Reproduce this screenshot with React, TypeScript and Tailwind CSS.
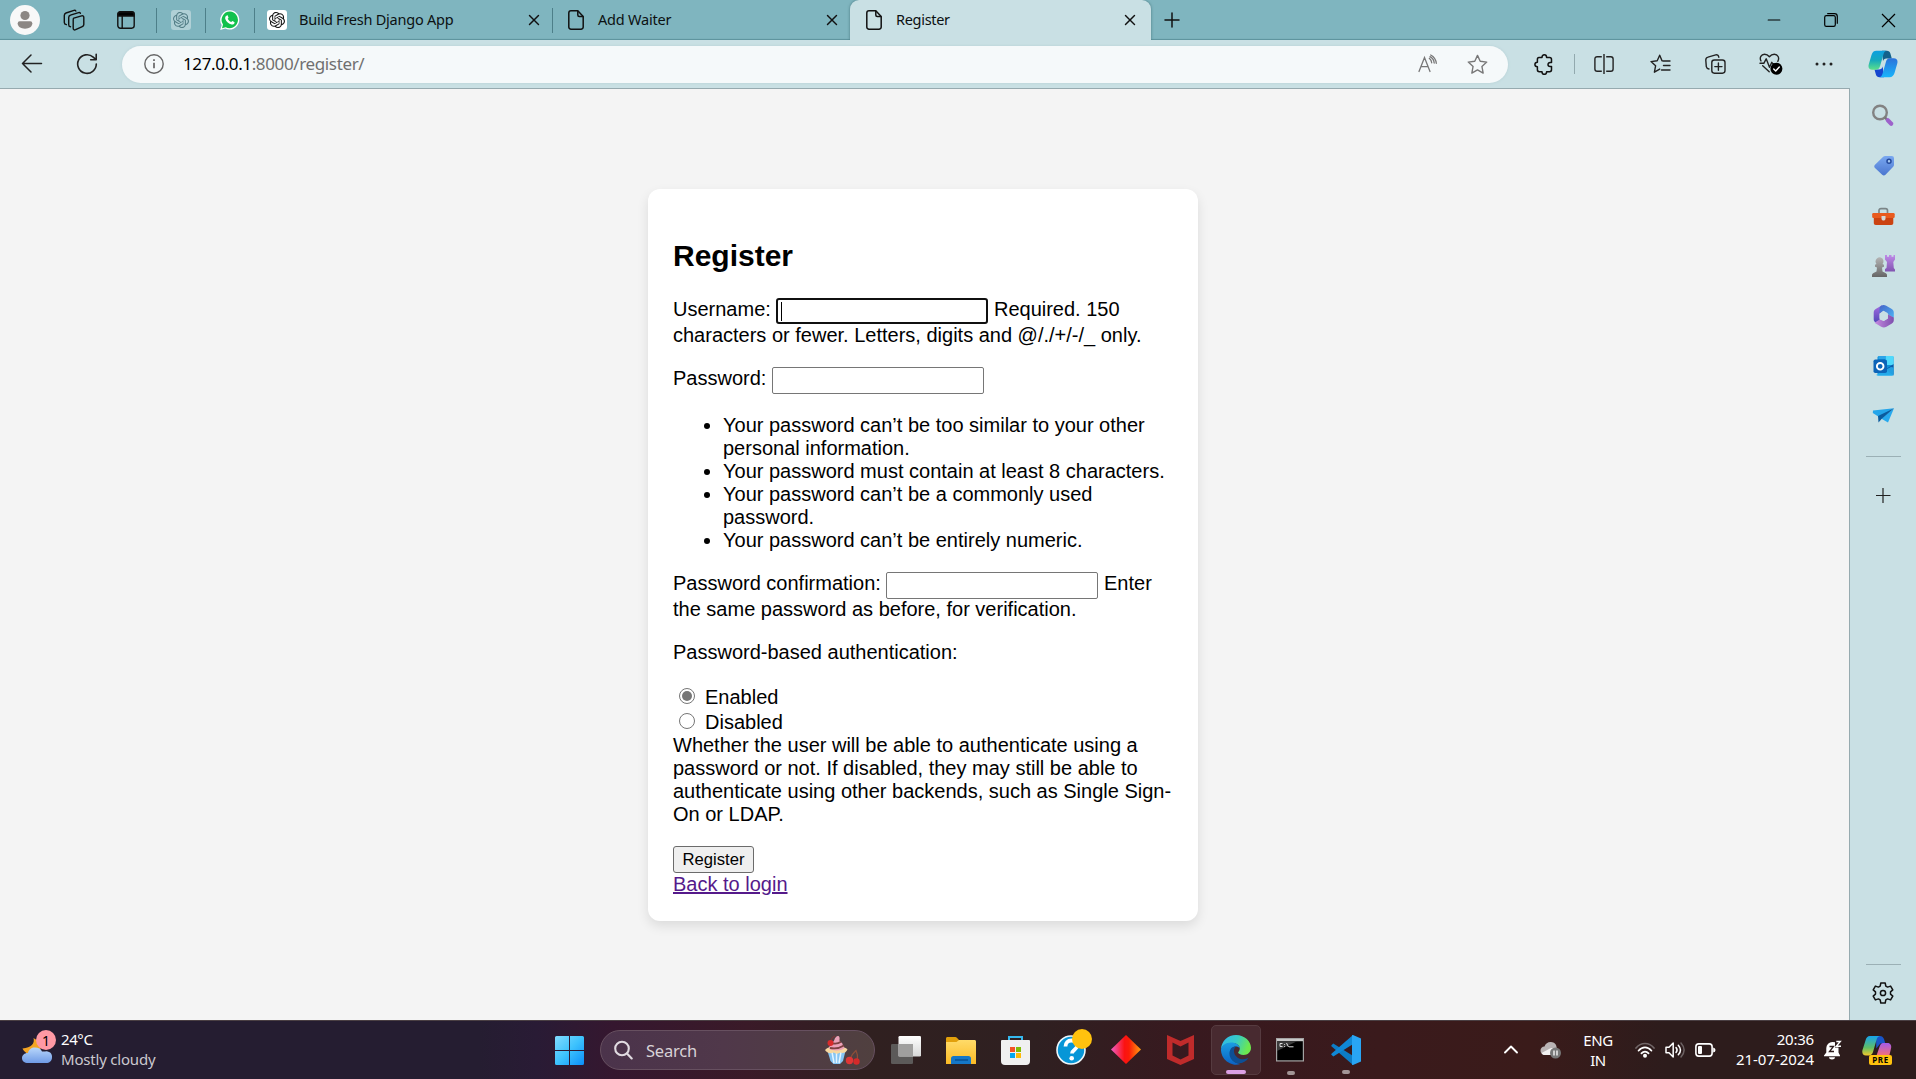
import React from "react";
import { SiOpenai } from "react-icons/si";
import { X, Plus, Minus } from "lucide-react";

const Sep = ({ className = "" }: { className?: string }) => (
  <div className={`h-[25px] w-px shrink-0 bg-[#4d7f89] ${className}`} />
);

const PageIcon = () => (
  <svg width="16" height="20" viewBox="0 0 16 20" fill="none" stroke="#111" strokeWidth="1.5" strokeLinejoin="round">
    <path d="M3 .8h6.8L15.2 6.4V17a2.2 2.2 0 0 1-2.2 2.2H3A2.2 2.2 0 0 1 .8 17V3A2.2 2.2 0 0 1 3 .8Z" />
    <path d="M9.8.8v4.1c0 .9.6 1.5 1.5 1.5h3.9" />
  </svg>
);

const CloseTab = () => <X size={18} strokeWidth={1.9} className="shrink-0 text-[#111]" />;

function TabBar() {
  return (
    <div className="flex h-10 items-center bg-[#7fb5bf] text-[14.5px] text-[#0c1112] shadow-[inset_0_-2px_1px_-1px_#5d929c]">
      <svg className="ml-[10px]" width="30" height="30" viewBox="0 0 30 30">
        <circle cx="15" cy="15" r="15" fill="#f8f8f8" />
        <circle cx="15" cy="10.5" r="4.6" fill="#8c8784" />
        <path d="M9.7 16.3h10.6a2 2 0 0 1 2 2c0 3.4-3 5.4-7.3 5.4s-7.3-2-7.3-5.4a2 2 0 0 1 2-2Z" fill="#8c8784" />
      </svg>
      <svg className="ml-[23px]" width="22" height="22" viewBox="0 0 22 22" fill="none" stroke="#111" strokeWidth="1.4" strokeLinejoin="round" strokeLinecap="round">
        <path d="M10.8 9.2 18.6 6.9c1.4-.4 2.2.3 2.2 1.6v7c0 1-.5 1.700-1.500 2.100l-6.700 3.100c-1.400.6-2.400 0-2.400-1.400v-8.400c0-.9.1-1.400.6-1.700Z" />
        <path d="M7.500 17.800c-1.200-.1-1.800-.9-1.800-2V8.400c0-1.200.6-1.900 1.700-2.200L15.600 3.600c.9-.2 1.500.1 1.800.7" />
        <path d="M3.400 15.600C2.100 15.400 1.300 14.600 1.300 13.400V6.400c0-1.200.6-2 1.700-2.400L11 1.400c.8-.2 1.500 0 1.800.6" />
      </svg>
      <svg className="ml-[32px]" width="18" height="18" viewBox="0 0 18 18" fill="none" stroke="#111" strokeWidth="1.4">
        <rect x=".8" y=".8" width="16.400" height="16.400" rx="2.600" />
        <path d="M1 3.400C1 1.800 1.800 1 3.400 1h11.200C16.200 1 17 1.800 17 3.400V5H1Z" fill="#000" />
        <path d="M5.200 5v12" />
      </svg>
      <Sep className="ml-[21px]" />
      <div className="ml-[14px] flex size-5 items-center justify-center rounded-[3px] bg-[#b0d0d6]">
        <SiOpenai size={16} color="#527d86" />
      </div>
      <Sep className="ml-[14px]" />
      <svg className="ml-[14px]" width="20" height="20" viewBox="0 0 20 20">
        <path d="M10 .2A9.700 9.700 0 0 0 1.700 15L.2 20l5.100-1.400A9.700 9.700 0 1 0 10 .2Z" fill="#fff" />
        <path d="M10 1.600A8.300 8.300 0 0 0 3 14.500l-1 3.700 3.700-1A8.300 8.300 0 1 0 10 1.600Z" fill="#12c14d" />
        <path d="M6.900 5.400c.5-.1.800 0 1 .5l.6 1.500c.2.500-.6 1-.8 1.400.8 1.600 1.900 2.600 3.500 3.300.4 0 .9-1.100 1.300-1l1.700.8c.5.200.4.800.2 1.400-.4 1-1.700 1.500-2.800 1.200-3-.8-5.200-2.800-6.300-5.500-.5-1.500.3-3.400 1.600-3.600Z" fill="#fff" />
      </svg>
      <Sep className="ml-[14px]" />
      <div className="ml-3 flex size-5 shrink-0 items-center justify-center rounded-[3px] bg-white">
        <SiOpenai size={16} color="#151515" />
      </div>
      <span className="ml-[12px] w-[226px] whitespace-nowrap tracking-[-0.24px]">Build Fresh Django App</span>
      <CloseTab />
      <Sep className="ml-[9px]" />
      <div className="ml-[15px]"><PageIcon /></div>
      <span className="ml-[14px] w-[225px] whitespace-nowrap tracking-[-0.2px]">Add Waiter</span>
      <CloseTab />
      <div className="relative ml-[9px] flex h-10 w-[301px] items-center rounded-t-[9px] bg-[#c9e0e4] shadow-[0_0_3px_#47777f]">
        <div className="absolute -bottom-1 -left-1 -right-1 h-1 bg-[#c9e0e4]" />
        <div className="ml-4"><PageIcon /></div>
        <span className="ml-[14px] w-[225px] whitespace-nowrap tracking-[-0.3px]">Register</span>
        <CloseTab />
      </div>
      <Plus className="ml-[9px] text-[#111]" size={24} strokeWidth={1.5} />
      <div className="ml-auto mr-5 flex items-center text-black">
        <Minus size={20} strokeWidth={1.3} />
        <svg className="ml-[40px]" width="14" height="14" viewBox="0 0 14 14" fill="none" stroke="#000" strokeWidth="1.2">
          <rect x=".7" y="2.700" width="10.600" height="10.600" rx="1.600" />
          <path d="M3.200.7h7.300a2.800 2.800 0 0 1 2.800 2.800v7.300" />
        </svg>
        <svg className="ml-[43px]" width="15" height="15" viewBox="0 0 15 15" stroke="#000" strokeWidth="1.200">
          <path d="m1 1 13 13M14 1 1 14" />
        </svg>
      </div>
    </div>
  );
}

const STAR = "M10 1.300 12.600 6.900 18.800 7.700 14.200 11.900 15.400 18.200 10 15.200 4.600 18.200 5.800 11.900 1.200 7.700 7.400 6.900Z";

const CopilotLogo = () => (
  <svg width="30" height="28" viewBox="0 0 30 28">
    <defs>
      <linearGradient id="cpA" x1="0" y1="0" x2="0" y2="1"><stop stopColor="#0c9fe0" /><stop offset=".5" stopColor="#16a9bd" /><stop offset="1" stopColor="#5be08a" /></linearGradient>
      <linearGradient id="cpB" x1="0" y1="0" x2="0" y2="1"><stop stopColor="#2b72da" /><stop offset="1" stopColor="#18b4fb" /></linearGradient>
    </defs>
    <path d="M14 .8h4.800c2 0 3 .8 3.600 2.700l1.400 5h-5.500c-1.800 0-2.800 1-3.300 2.700Z" fill="#12628c" />
    <path d="M16 27.200h-4.500c-2 0-3-.8-3.600-2.700L6.500 19.500H11c2 0 3-.8 3.700-3Z" fill="#1546cf" />
    <path d="M8.500.8h10c-1.800.3-2.500 1.600-3.100 3.600l-3.300 11.700c-.7 2.300-1.800 3.600-4.100 3.600H4.400C1 19.700-.1 17.500.8 14.200L3.500 5C4.400 2.300 5.700.8 8.500.8Z" fill="url(#cpA)" />
    <path d="M21.500 27.200h-10c1.800-.3 2.500-1.600 3.100-3.600l3.300-11.700c.7-2.300 1.800-3.600 4.100-3.600h3.600c3.400 0 4.500 2.200 3.600 5.500L26.500 23c-.9 2.700-2.200 4.200-5 4.200Z" fill="url(#cpB)" />
  </svg>
);

function Toolbar() {
  return (
    <div className="flex h-12 items-center bg-[#c9e0e4]">
      <svg className="ml-[21px]" width="22" height="20" viewBox="0 0 22 20" fill="none" stroke="#222" strokeWidth="1.500" strokeLinecap="round" strokeLinejoin="round">
        <path d="M20.500 9.500H1.500M10 1 1.500 9.500 10 18" />
      </svg>
      <svg className="ml-[33px]" width="22" height="22" viewBox="0 0 22 22" fill="none" stroke="#222" strokeWidth="1.600" strokeLinecap="round" strokeLinejoin="round">
        <path d="M20.300 11A9.300 9.300 0 1 1 17.200 4.100L20 6.700M20.200 1.300v5.500h-5.500" />
      </svg>
      <div className="ml-[24px] flex h-[37px] w-[1386px] items-center rounded-full bg-[#f5f9fa] shadow-[0_0_3px_#b5cfd4]">
        <svg className="ml-[22px]" width="20" height="20" viewBox="0 0 20 20" fill="none" stroke="#666" strokeWidth="1.400">
          <circle cx="10" cy="10" r="9.200" />
          <path d="M10 8.700v5.500M10 5.300v1.700" strokeWidth="1.700" />
        </svg>
        <span className="ml-[19px] text-[17px] tracking-[-0.37px] text-[#707070]"><span className="text-black">127.0.0.1</span>:8000/register/</span>
        <svg className="ml-auto" width="20" height="20" viewBox="0 0 20 20" fill="none" stroke="#777" strokeWidth="1.300" strokeLinecap="round">
          <path d="M1 17.500 6.500 3.500 12 17.500M3 12.700h7M11.300 4.300c1.400 1.100 2.200 2.600 2.400 4.500M12.700 1c3.200 1.700 5.200 4.400 5.600 8.300" />
          <path d="M12 2.700c2.500 1.300 3.900 3.400 4.200 6.300" />
        </svg>
        <svg className="ml-[29px] mr-[20px]" width="21" height="21" viewBox="0 0 20 20" fill="none" stroke="#777" strokeWidth="1.300" strokeLinejoin="round"><path d={STAR} /></svg>
      </div>
      <svg className="ml-[26px]" width="20" height="21" viewBox="0 0 20 21" fill="none" stroke="#111" strokeWidth="1.500" strokeLinejoin="round">
        <path d="M5 3.500h3c0-1.600.9-2.700 2.300-2.700s2.300 1.100 2.300 2.700h3c1.100 0 1.900.7 1.900 1.900v3.200h-1.400c-1.300 0-2.100.8-2.100 2s.8 2 2.100 2h1.400v3.200c0 1.200-.8 1.900-1.900 1.900h-3c0 1.600-.9 2.600-2.300 2.600S8 19.300 8 17.700H5.300c-1.200 0-1.900-.7-1.900-1.900v-3C1.800 12.800.9 12 .9 10.600s.9-2.300 2.500-2.300V5.400c0-1.200.6-1.900 1.600-1.900Z" />
      </svg>
      <div className="ml-[20px] h-5 w-px bg-[#92a9ae]" />
      <svg className="ml-[19px]" width="20" height="20" viewBox="0 0 20 20" fill="none" stroke="#222" strokeWidth="1.400">
        <path d="M7.800 2.700H3.200C1.800 2.700.9 3.500.9 5v10c0 1.500.9 2.300 2.300 2.300h4.600M12.200 2.700h4.600c1.400 0 2.300.8 2.300 2.300v10c0 1.500-.9 2.300-2.300 2.300h-4.600M10 0v20" />
      </svg>
      <svg className="ml-[36px]" width="21" height="20" viewBox="0 0 21 20" fill="none" stroke="#222" strokeWidth="1.400" strokeLinejoin="round" strokeLinecap="round">
        <path d="M13.300 6.900 12 6.700 9.700 1.200 7.200 6.700 1 7.600l4.600 4.200-1.200 6.400 5.300-3.100M13 7h7M13.500 11.500H20M11.500 16H20" />
      </svg>
      <svg className="ml-[34px]" width="21" height="20" viewBox="0 0 21 20" fill="none" stroke="#222" strokeWidth="1.400" strokeLinecap="round">
        <rect x="6.800" y="6" width="13.200" height="13.200" rx="2.600" />
        <path d="M13.400 9v7.200M9.800 12.600H17M4 15C2.400 14.800 1.600 14 1.300 12.600L.8 6.300C.7 4.500 1.400 3.500 3 3.100L10.700.9c1.600-.4 2.700.3 3.100 2.300" />
      </svg>
      <svg className="ml-[33px]" width="24" height="22" viewBox="0 0 24 22" fill="none" stroke="#222" strokeWidth="1.400" strokeLinejoin="round" strokeLinecap="round">
        <path d="M2 8C.2 4.800 2.200 1.300 5.500 1.300c2.200 0 3.600.9 4.900 2.500 1.300-1.600 2.700-2.500 4.900-2.500 3.500 0 5.500 3.600 3.500 7M1 10.300h3.800l2.400-4.500 3.300 8.500 2.300-5 1 1.500h1.400M3.700 12.800l6.500 5.900" />
        <circle cx="17.400" cy="15.800" r="6" fill="#000" stroke="none" />
        <path d="m14.700 16 2 2 3.600-4" stroke="#fff" />
      </svg>
      <svg className="ml-[32px]" width="18" height="4" viewBox="0 0 18 4" fill="#222"><circle cx="2" cy="2" r="1.500" /><circle cx="9" cy="2" r="1.500" /><circle cx="16" cy="2" r="1.500" /></svg>
      <div className="ml-auto mr-[18px]"><CopilotLogo /></div>
    </div>
  );
}

function Sidebar() {
  return (
    <aside className="flex w-[66px] shrink-0 flex-col items-center bg-[#c9e0e4] pt-4">
      <svg width="24" height="24" viewBox="0 0 24 24" fill="none">
        <circle cx="9" cy="8.500" r="6.800" stroke="#828282" strokeWidth="2.400" />
        <path d="m13.800 13.300 2 2" stroke="#777" strokeWidth="2.500" />
        <path d="m16.800 16.300 3.400 3.400" stroke="#9d62cb" strokeWidth="4.200" strokeLinecap="round" />
      </svg>
      <svg className="mt-[26px]" width="24" height="24" viewBox="0 0 24 24">
        <defs><linearGradient id="tg" x1="0" y1="0" x2="0" y2="1"><stop stopColor="#7aa8f0" /><stop offset="1" stopColor="#4a76cf" /></linearGradient></defs>
        <path d="M14.200 2h6.600A2.200 2.200 0 0 1 23 4.200v6.600c0 .8-.2 1.300-.8 1.900l-7.700 8c-1 1-2.300 1-3.300 0L4 14c-1-1-1-2.300 0-3.300l8.200-8c.6-.5 1.200-.7 2-.7Z" fill="url(#tg)" />
        <circle cx="18" cy="7.200" r="2" fill="#a4c7f0" stroke="#244a9c" strokeWidth="1.500" />
      </svg>
      <svg className="mt-[28px]" width="24" height="22" viewBox="0 0 24 22">
        <path d="M8 8V4.500C8 3.200 8.800 2.600 10 2.600h4.500c1.200 0 2 .6 2 1.900V8" fill="none" stroke="#7b8587" strokeWidth="1.700" />
        <path d="M2.800 9h19.500v8c0 1.300-.7 2-2 2H4.800c-1.300 0-2-.7-2-2Z" fill="#cb4311" />
        <rect x="1.200" y="7" width="22.500" height="5" rx="1.200" fill="#e95b1e" />
        <path d="M10.500 10h4v2.500c0 2.800-4 2.800-4 0Z" fill="#d5d9d9" />
      </svg>
      <svg className="mt-[26px]" width="24" height="24" viewBox="0 0 24 24">
        <defs><linearGradient id="pw" x1="0" y1="0" x2="0" y2="1"><stop stopColor="#b4b4b4" /><stop offset="1" stopColor="#666" /></linearGradient><linearGradient id="rk" x1="0" y1="0" x2="0" y2="1"><stop stopColor="#bf8ae8" /><stop offset="1" stopColor="#8154b0" /></linearGradient></defs>
        <path d="M14 1h2v1.700h2V1h2.500v1.700h2V1H24v4.500L22.300 8l.5 6 1.200 1.500v2H14V15l1.500-1 .5-6L14 5.500Z" fill="url(#rk)" />
        <path d="M4.500 7.500a4 4 0 1 1 7 2.500l1.500.8v2l-2 .7.500 4 3 1.600c1 .5 1.500 1.200 1.500 2.300V23H1v-1.600c0-1.100.5-1.800 1.500-2.300l3-1.600.5-4-2-.7v-2l1.500-.8c-.6-.7-1-1.500-1-2.500Z" fill="url(#pw)" />
      </svg>
      <svg className="mt-[26px]" width="24" height="24" viewBox="0 0 24 24">
        <defs>
          <linearGradient id="m1" x1="0" y1="0" x2="0" y2="1"><stop stopColor="#a56be0" /><stop offset="1" stopColor="#5148b8" /></linearGradient>
          <linearGradient id="m2" x1="0" y1="0" x2="1" y2="1"><stop stopColor="#4664c8" /><stop offset="1" stopColor="#4cb4f4" /></linearGradient>
          <linearGradient id="m3" x1="0" y1="0" x2="1" y2="0"><stop stopColor="#c58be0" /><stop offset="1" stopColor="#7e4fae" /></linearGradient>
        </defs>
        <path d="M11 1.300 4.700 5C3.300 5.800 2.700 7 2.700 8.500v6.800c0 1.700.8 2.800 2.300 3.200l3.700-2.200V9.500l2.300-1.800Z" fill="url(#m1)" />
        <path d="M10 1.800c1.800-1.100 3.500-1.100 5.200-.1l5.600 3.300c1.300.8 2 2 2 3.500v5.300l-6-3.500-.3-1.300-4-2.200-4 2.200V5c0-1.500.5-2.400 1.500-3.200Z" fill="url(#m2)" />
        <path d="M16.800 10.300v4.200l-4.100 2.600-4-1.500-5.200 3.100 6.700 4c1.700 1 3.500 1 5.200 0l5.500-3.300c1.300-.8 1.900-1.900 1.900-3.400v-2.500Z" fill="url(#m3)" />
        <path d="M12.700 7.300 16.900 9.700v4.800l-4.200 2.400-4.200-2.400V9.700Z" fill="#c9e0e4" />
      </svg>
      <svg className="mt-[26px]" width="24" height="24" viewBox="0 0 24 24">
        <rect x="6.500" y="2" width="16" height="19" rx="1.600" fill="#0e90d8" />
        <rect x="14.500" y="2" width="8" height="9" fill="#4fd9fc" /><rect x="7.500" y="2" width="7" height="3" fill="#2ca4e8" />
        <path d="m22.500 10-8 5.500 8 6Z" fill="#0d5ca8" /><path d="M5.500 20.500 20 13l2.500.5v7c0 .8-.5 1.400-1.400 1.400H7c-.8 0-1.500-.4-1.500-1.400Z" fill="#29b0ef" opacity=".8" />
        <rect x="2.500" y="5.500" width="13.500" height="13.500" rx="1.800" fill="#0c64b8" />
        <circle cx="9.200" cy="12.300" r="3.300" fill="none" stroke="#fff" strokeWidth="1.900" />
      </svg>
      <svg className="mt-[26px]" width="24" height="24" viewBox="0 0 24 24">
        <path d="M2 6.500 23 4.200 8.500 13.300 1.800 9Z" fill="#24a5ea" /><path d="M23 4.200 17 18.500 10 14.500Z" fill="#27a9ee" /><path d="M23 4.200 7 11.900l.5 6.600 3.500-3.900Z" fill="#0b5b9e" />
      </svg>
      <div className="mt-[28px] h-px w-[35px] bg-[#9bb0b5]" />
      <svg className="mt-[31px]" width="15" height="15" viewBox="0 0 15 15" stroke="#222" strokeWidth="1.200"><path d="M7 0v15M-.5 7.500h15" /></svg>
      <div className="mt-auto h-px w-[35px] bg-[#9bb0b5]" />
      <svg className="mb-[16px] mt-[17px]" width="22" height="22" viewBox="0 0 22 22" fill="none" stroke="#111" strokeWidth="1.500" strokeLinejoin="round">
        <path d="M8.800 1h4.400l.6 3.100 1.800 1 3-1 2.200 3.800-2.300 2v2.200l2.300 2-2.200 3.800-3-1-1.800 1-.6 3.100H8.800l-.6-3.100-1.800-1-3 1-2.200-3.800 2.300-2V9.900l-2.300-2 2.200-3.800 3 1 1.800-1Z" />
        <circle cx="11" cy="11" r="2.600" />
      </svg>
    </aside>
  );
}

const Field = ({ label, after, focused }: { label: string; after?: string; focused?: boolean }) => (
  <div className="flex h-[26px] items-start whitespace-pre">
    <label>{label} </label>
    {focused ? (
      <div className="flex h-[26px] w-[212px] items-center rounded-[3px] border-2 border-[#101010] bg-white pl-[3px]"><div className="h-[19px] w-px bg-black" /></div>
    ) : (
      <div className="h-[26.500px] w-[212px] rounded-[2px] border border-[#767676] bg-white" />
    )}
    {after && <span> {after}</span>}
  </div>
);

const Radio = ({ label, on }: { label: string; on?: boolean }) => (
  <div className="flex h-[25px] items-start pl-[6px]">
    <span className="mt-[3.500px] flex size-4 items-center justify-center rounded-full border border-[#767676] bg-white">
      {on && <span className="size-[10px] rounded-full bg-[#767676]" />}
    </span>
    <span className="ml-[10px] pt-[2px]">{label}</span>
  </div>
);

function RegisterCard() {
  return (
    <main className="h-[732px] w-[550px] rounded-[12px] bg-white px-[25px] pt-[50px] font-['Liberation_Sans',Arial,sans-serif] text-[20px] leading-[23px] text-black shadow-[0_5px_12px_rgba(0,0,0,0.1)]">
      <h2 className="text-[30px] font-bold leading-[34px]">Register</h2>
      <div className="mt-[25px]">
        <Field label="Username:" after="Required. 150" focused />
        <p>characters or fewer. Letters, digits and @/./+/-/_ only.</p>
      </div>
      <div className="mt-5"><Field label="Password:" /></div>
      <ul className="mt-[21px] list-disc pl-[50px]">
        <li>Your password can’t be too similar to your other personal information.</li>
        <li>Your password must contain at least 8 characters.</li>
        <li>Your password can’t be a commonly used password.</li>
        <li>Your password can’t be entirely numeric.</li>
      </ul>
      <div className="mt-5">
        <Field label="Password confirmation:" after="Enter" />
        <p>the same password as before, for verification.</p>
      </div>
      <p className="mt-5">Password-based authentication:</p>
      <div className="mt-5">
        <Radio label="Enabled" on />
        <Radio label="Disabled" />
      </div>
      <p>Whether the user will be able to authenticate using a password or not. If disabled, they may still be able to authenticate using other backends, such as Single Sign-On or LDAP.</p>
      <button className="mt-5 flex h-[27px] w-[81px] items-center justify-center rounded-[3px] border border-[#6b6b6b] bg-[#efefef] text-[16.670px]">Register</button>
      <a href="#" className="block w-fit text-[#551a8b] underline">Back to login</a>
    </main>
  );
}

const EdgeIcon = () => (
  <svg width="30" height="30" viewBox="0 0 30 30">
    <defs>
      <linearGradient id="e1" x1="0" y1="0" x2="1" y2=".3"><stop stopColor="#2fb6ef" /><stop offset=".55" stopColor="#37cbc6" /><stop offset="1" stopColor="#6ce84f" /></linearGradient>
      <linearGradient id="e2" x1="0" y1="0" x2="0" y2="1"><stop stopColor="#1b9de2" /><stop offset="1" stopColor="#0b62c4" /></linearGradient>
    </defs>
    <path d="M0 14C.6 6 6.800 0 15 0c9 0 15 6.600 15 12.800 0 4.600-3.500 7.200-7.300 7.200-3.500 0-5.600-1.300-5.600-2.400 0-.8 1.700-1.500 1.700-4.100C18.800 10 15 8 11 8 5 8 1.500 11 0 14Z" fill="url(#e1)" />
    <path d="M0 14c1.200-3.600 5-6.400 10-6.400 5 0 8.800 2.600 8.800 6-1-1.400-2.300-2-4-2-3 0-5.400 3-5.400 7 0 6 4.800 10 10 10.400A15 15 0 0 1 0 14Z" fill="url(#e2)" />
    <path d="M10 13.500c-2.500 3.500-2 9 1.500 12.300 4.700 4.300 12.500 3 16-3-3 1.800-7.500 2-10.800-.1-4-2.600-5-7.400-1.900-11.100-1.800 0-3.600.5-4.800 1.900Z" fill="#0d4f94" />
  </svg>
);

function Taskbar() {
  return (
    <footer className="flex h-[59px] items-center border-t border-[#4a3f43] bg-[linear-gradient(90deg,#251d31_0%,#251d31_25%,#291b35_28%,#35172f_32%,#3a1a28_39%,#302020_45%,#2f2021_54%,#38191f_62%,#3a1a1c_72%,#3a1b1a_80%,#2d1c1c_87%,#2d1c1c_100%)] font-['Noto_Sans','Open_Sans',sans-serif] text-white">
      <div className="relative ml-[22px] size-[34px]">
        <svg width="34" height="34" viewBox="0 0 34 34">
          <defs><linearGradient id="cl" x1="0" y1="0" x2="0" y2="1"><stop stopColor="#b9d7fb" /><stop offset="1" stopColor="#6f9be6" /></linearGradient></defs>
          <path d="M11.500 5c1.500 5-2 10-11 10.500 2 5 9.500 8 14.500 5s6-10-3.500-15.500Z" fill="#f4a524" />
          <path d="M6 20c.5-3.500 3.500-5.500 7-5.500 3.500 0 6 1.500 7 4h3a5.500 5.500 0 0 1 7 6c0 3.500-2.500 5.500-6 5.500H6c-3.500 0-6-1.800-6-5 0-3 3-5.300 6-5Z" fill="url(#cl)" />
        </svg>
        <div className="absolute left-[14px] top-[-3px] flex size-5 items-center justify-center rounded-full bg-[#ff99a4] text-[14px] text-black">1</div>
      </div>
      <div className="-mt-[2px] ml-[5px] w-[494px] whitespace-nowrap text-[15px] leading-5 tracking-[-0.4px]">
        <div>24°C</div>
        <div className="tracking-[-0.2px] text-[#cbc8cf]">Mostly cloudy</div>
      </div>
      <svg width="29" height="29" viewBox="0 0 29 29">
        <defs><linearGradient id="wn" x1="0" y1="0" x2="1" y2="1"><stop stopColor="#82dcff" /><stop offset=".5" stopColor="#3dc2fd" /><stop offset="1" stopColor="#0b8efa" /></linearGradient></defs>
        <path d="M1.500 0H14v14H0V1.500Q0 0 1.500 0ZM15 0h12.500Q29 0 29 1.500V14H15ZM0 15h14v14H1.500Q0 29 0 27.500ZM15 15h14v12.500q0 1.500-1.500 1.500H15Z" fill="url(#wn)" />
      </svg>
      <div className="ml-4 flex h-10 w-[275px] items-center rounded-full border border-[#675060] bg-[linear-gradient(90deg,#4b334b,#50384a_45%,#50403f)]">
        <svg className="ml-[13px]" width="19" height="20" viewBox="0 0 19 20" fill="none" stroke="#e1dbe1" strokeWidth="2.100" strokeLinecap="round"><circle cx="8" cy="8.500" r="6.800" /><path d="m13 13.500 4.700 5" /></svg>
        <span className="ml-[13px] mt-[2px] text-[16.500px] tracking-[-0.2px] text-[#d8d2d7]">Search</span>
        <svg className="ml-auto mr-[14px]" width="36" height="30" viewBox="0 0 36 30">
          <path d="M3.500 16h18l-2.500 10-3 3H9.500l-3-3Z" fill="#85c5f3" />
          <path d="M8 17 10 28M12.500 17v11M17 17 15 28" stroke="#e3f4ff" strokeWidth="1.500" />
          <path d="M1 15c2-2.500 5-3 7-3h9c3 0 5.500 1 6.500 2.500-1.500 3.500-5 4-7 3-2 1.500-5 1.500-7 0-3 1.500-7 .5-8.500-2.500Z" fill="#f6d7a0" />
          <path d="M5 13.500c0-3 2.500-4 3.500-4-1-2 1.500-3 2-5 .5-2.500 4-5.500 5-2 .4 1.500-.5 3 .5 4s3.500 1.500 2.500 4c1.500.5 2 1.500 1.500 3-3 2.500-12 2.500-15 0Z" fill="#eca1b7" />
          <path d="M6 13c5 1 10 0 14-2.500M9 8.500c3 .5 6-.3 8-1.800" stroke="#7d4141" strokeWidth="1.800" fill="none" />
          <circle cx="6.500" cy="8" r="3" fill="#d92b2b" /><path d="M7 5Q8 2 11 1" stroke="#833" fill="none" />
          <path d="M26 24Q28 19 32 15.500q2 4 1.500 10" stroke="#8e4e38" fill="none" strokeWidth="1.200" />
          <circle cx="25.500" cy="25.500" r="3.700" fill="#e03636" /><circle cx="32.500" cy="26.500" r="3.200" fill="#d52a2a" />
        </svg>
      </div>
      <svg className="ml-4" width="30" height="28" viewBox="0 0 30 28">
        <defs><linearGradient id="tv" x1="0" y1="0" x2="0" y2="1"><stop stopColor="#fff" /><stop offset="1" stopColor="#d7d7d7" /></linearGradient></defs>
        <rect y="8" width="22" height="20" rx="1.300" fill="#5c5a59" /><rect x="7.500" width="22.500" height="20.500" rx="1.300" fill="url(#tv)" /><path d="M7.500 8H22v12.500H7.500Z" fill="#a09f9e" />
      </svg>
      <svg className="ml-[25px]" width="30" height="27" viewBox="0 0 30 27">
        <defs><linearGradient id="fd" x1="0" y1="0" x2="0" y2="1"><stop stopColor="#ffdb69" /><stop offset="1" stopColor="#fbba25" /></linearGradient></defs>
        <path d="M0 1.500C0 .7.600 0 1.500 0h7.700c.8 0 1.400.3 1.900.9L13 3v5H0Z" fill="#e2a00b" />
        <path d="M0 5h10.500L13 3h15.500c.9 0 1.500.6 1.500 1.500V27H0Z" fill="url(#fd)" />
        <path d="M5 27v-5.500C5 20 6 19 7.500 19h15c1.500 0 2.500 1 2.500 2.500V27Z" fill="#1577c7" /><path d="M9 23h13" stroke="#064b8d" strokeWidth="1.300" />
      </svg>
      <svg className="ml-[25px]" width="29" height="29" viewBox="0 0 29 29">
        <path d="M8 5V1h13v4" fill="none" stroke="#35b9ee" strokeWidth="2" />
        <path d="M0 5q0-1 1-1h27q1 0 1 1V25q0 4-4 4H4q-4 0-4-4Z" fill="#f0f0f0" />
        <path d="M9 11h5v5H9Z" fill="#f35325" /><path d="M15 11h5v5h-5Z" fill="#81bc06" /><path d="M9 17h5v5H9Z" fill="#05a6f0" /><path d="M15 17h5v5h-5Z" fill="#ffba08" />
      </svg>
      <div className="relative ml-[26px] size-[30px]">
        <svg width="30" height="30" viewBox="0 0 30 30"><circle cx="15" cy="15" r="14" fill="#0796d7" stroke="#eef7fb" strokeWidth="1.600" /><path d="M9.500 11.500c0-4 2.500-6 5.800-6 3.500 0 6 2 6 5 0 4-5.300 4.500-5.300 8" fill="none" stroke="#fff" strokeWidth="3.800" /><circle cx="15.700" cy="23.200" r="2.300" fill="#fff" /></svg>
        <div className="absolute left-4 top-[-6px] size-5 rounded-full bg-[#ffc20e]" />
      </div>
      <svg className="ml-[25px]" width="30" height="30" viewBox="0 0 30 30">
        <defs><linearGradient id="dm" x1="0" y1="0" x2="1" y2="0"><stop stopColor="#ee5fc8" /><stop offset=".45" stopColor="#fb1212" /><stop offset=".6" stopColor="#fb1b08" /><stop offset="1" stopColor="#ffa011" /></linearGradient></defs>
        <path d="m15 0 15 14.500-15 14.500L0 14.500Z" fill="url(#dm)" />
      </svg>
      <svg className="ml-[26px]" width="27" height="30" viewBox="0 0 27 30"><path d="M0 0 13.500 6 27 0v24l-13.500 6L0 24ZM5.500 7.500v13l8 4 8-4v-13l-8 4Z" fill="#bf2b2b" fillRule="evenodd" /></svg>
      <div className="relative ml-[17px] flex size-[50px] items-center justify-center rounded-[5px] border border-[#563b40] bg-[#482a30]">
        <EdgeIcon />
        <div className="absolute bottom-0 left-[14px] h-1 w-5 rounded-full bg-[#dba0e4]" />
      </div>
      <div className="relative ml-[15px]">
        <svg width="28" height="24" viewBox="0 0 28 24"><rect x=".6" y=".6" width="26.800" height="22.300" fill="#000" stroke="#a3a3a3" strokeWidth="1.200" /><path d="M1 1h26v2.200H1Z" fill="#c8c8c8" /><path d="M1 3.200h20L1 13Z" fill="#3c3c3c" /><path d="M6.500 5.500H4v3h2.500M8.500 6v.8M8.500 8v.8M10.500 5l2 4M13 8.800h4.500" stroke="#ddd" fill="none" strokeWidth="1" /></svg>
        <div className="absolute left-[11px] top-[33px] h-1 w-2 rounded-full bg-[#a39596]" />
      </div>
      <div className="relative ml-[27px] size-[30px]">
        <svg width="30" height="30" viewBox="0 0 30 30">
          <path d="M2.300 8.600.7 10a1.100 1.100 0 0 0 0 1.600L22 30l1-8.500Z" fill="#0d7cc5" />
          <path d="M2.300 21.400.7 20a1.100 1.100 0 0 1 0-1.600L22 0l1 8.500Z" fill="#1088d6" />
          <path d="M22 0 30 3.500v23L22 30c-.6.2-1-.2-1-.8V.8C21 .2 21.400-.2 22 0Z" fill="#29a5f4" />
        </svg>
        <div className="absolute left-[11px] top-[35px] h-1 w-2 rounded-full bg-[#a39596]" />
      </div>
      <svg className="ml-auto" width="16" height="10" viewBox="0 0 16 10" fill="none" stroke="#fff" strokeWidth="1.900" strokeLinecap="round" strokeLinejoin="round"><path d="m2 7.500 6-6 6 6" /></svg>
      <svg className="ml-[21px]" width="22" height="18" viewBox="0 0 22 18">
        <path d="M4.500 5.500C5.500 2.500 8 .8 11 1c3.500.2 5.500 2.500 5.700 6L6 13H4C1.500 13 .5 11.500.5 9.500s1.500-4 4-4Z" fill="#b9b3b4" />
        <path d="M1.500 12 10 7.500c3-1 5.500-.5 7 2V14H4.500C3 14 2 13.500 1.500 12Z" fill="#f2f1f1" />
        <circle cx="15.500" cy="12" r="5.500" fill="#777" /><path d="M14 9.500v5M17 9.500v5" stroke="#fff" strokeWidth="1.300" />
      </svg>
      <div className="-mt-px ml-[19px] w-[34px] text-center text-[15px] leading-5 tracking-[-0.4px]"><div>ENG</div><div>IN</div></div>
      <svg className="ml-[20px]" width="20" height="16" viewBox="0 0 20 16" fill="none" strokeWidth="1.700" strokeLinecap="round">
        <path d="M1 6c5-6 13-6 18 0" stroke="#716667" /><path d="M3.500 8.700c3.800-4.500 9.200-4.500 13 0M6.400 11.400c2.200-2.500 5-2.500 7.200 0" stroke="#fff" /><circle cx="10" cy="13.800" r="2" fill="#fff" />
      </svg>
      <svg className="ml-[10px]" width="20" height="18" viewBox="0 0 20 18" fill="none" stroke="#fff" strokeWidth="1.500" strokeLinecap="round" strokeLinejoin="round">
        <path d="M1 6.200h3L8.200 2v14L4 11.800H1ZM11 6.500c1.300 1.500 1.300 3.500 0 5M13.300 4.200c2.700 3 2.700 6.600 0 9.600" /><path d="M16 2c4 4.500 4 9.500 0 14" stroke="#6b6061" />
      </svg>
      <svg className="ml-[10px]" width="21" height="14" viewBox="0 0 21 14"><rect x=".9" y=".9" width="16.200" height="12.200" rx="2.800" fill="none" stroke="#fff" strokeWidth="1.600" /><rect x="3" y="3" width="4" height="8" rx="1" fill="#fff" /><path d="M18.200 4.500q2.300.5 2.300 2.500t-2.300 2.500Z" fill="#fff" /></svg>
      <div className="-mt-[2px] ml-[16px] w-[82px] text-right text-[15px] leading-5"><div className="tracking-[-0.2px]">20:36</div><div className="tracking-[-0.02px]">21-07-2024</div></div>
      <svg className="ml-[10px]" width="18" height="20" viewBox="0 0 18 20">
        <path d="M8.500 2a6 6 0 0 0-6.200 6v4.500L0 15.500v.8h16v-.8l-1.500-3V2.500ZM5 17.200h6c0 3-6 3-6 0Z" fill="#fff" />
        <path d="M5.500 6.500h4L5.500 11.500h4.500" stroke="#2d1c1c" strokeWidth="1.300" fill="none" /><path d="M11 0h7v7.500h-7Z" fill="#2d1c1c" /><path d="M12.300 1.500h4L12.300 6.300h4.700" stroke="#fff" strokeWidth="1.400" fill="none" />
      </svg>
      <div className="relative ml-[20px] mr-[24px] h-[29px] w-[30px]">
        <svg width="30" height="28" viewBox="0 0 30 28">
          <defs><linearGradient id="pa" x1="0" y1="0" x2="0" y2="1"><stop stopColor="#16a4ed" /><stop offset=".6" stopColor="#60bd65" /><stop offset="1" stopColor="#f2c92c" /></linearGradient><linearGradient id="pb" x1="0" y1="0" x2="0" y2="1"><stop stopColor="#a35be9" /><stop offset="1" stopColor="#fd7169" /></linearGradient></defs>
          <path d="M14 0h4c2 0 3 1 4 3l1.300 4.500h-5l-4 5Z" fill="#1854c7" />
          <path d="M8 0h10c-2 .3-3 2-3.500 4L11 16c-.7 2-2 3.500-4 3.500H4C1 19.500-.3 17 .5 14L3.500 4.500C4.300 1.500 5.500 0 8 0Z" fill="url(#pa)" />
          <path d="M14 21l4-11.500C19 7.500 20 7 22 7h3.500c3 0 4.300 2.500 3.500 5.500L27 21Z" fill="url(#pb)" />
        </svg>
        <div className="absolute left-[7px] top-[19px] flex h-[10px] w-[23px] items-center justify-center rounded-[2px] bg-[#ffc20e] text-[8px] font-bold leading-none tracking-[0.6px] text-black">PRE</div>
      </div>
    </footer>
  );
}

export default function App() {
  return (
    <div className="flex h-[1079px] w-[1916px] flex-col overflow-hidden font-['Noto_Sans','Open_Sans',sans-serif]">
      <TabBar />
      <Toolbar />
      <div className="flex min-h-0 flex-1 bg-[#c9e0e4]">
        <div className="flex flex-1 justify-center border-r border-t border-[#96aaaf] bg-[#f4f4f4] pt-[100px]">
          <div className="mr-[3px]"><RegisterCard /></div>
        </div>
        <Sidebar />
      </div>
      <Taskbar />
    </div>
  );
}
